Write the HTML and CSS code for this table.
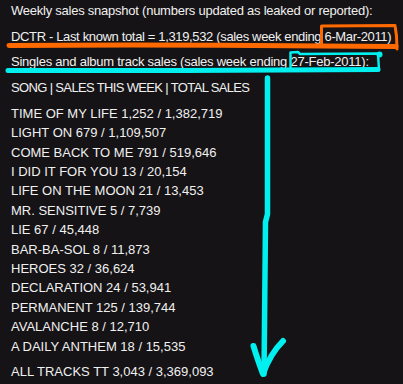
FILE: index.html
```html
<!DOCTYPE html>
<html>
<head>
<meta charset="utf-8">
<link rel="stylesheet" href="styles.css">
</head>
<body>
<div class="post">
  <p class="line tight">Weekly sales snapshot (numbers updated as leaked or reported):</p>
  <p class="line tighter">DCTR - Last known total = 1,319,532 (sales week ending 6-Mar-2011)</p>
  <p class="line tight">Singles and album track sales (sales week ending 27-Feb-2011):</p>
  <p class="line heading">SONG | SALES THIS WEEK | TOTAL SALES</p>
  <ul class="list">
    <li>TIME OF MY LIFE 1,252 / 1,382,719</li>
    <li>LIGHT ON 679 / 1,109,507</li>
    <li>COME BACK TO ME 791 / 519,646</li>
    <li>I DID IT FOR YOU 13 / 20,154</li>
    <li>LIFE ON THE MOON 21 / 13,453</li>
    <li>MR. SENSITIVE 5 / 7,739</li>
    <li>LIE 67 / 45,448</li>
    <li>BAR-BA-SOL 8 / 11,873</li>
    <li>HEROES 32 / 36,624</li>
    <li>DECLARATION 24 / 53,941</li>
    <li>PERMANENT 125 / 139,744</li>
    <li>AVALANCHE 8 / 12,710</li>
    <li>A DAILY ANTHEM 18 / 15,535</li>
  </ul>
  <p class="line">ALL TRACKS TT 3,043 / 3,369,093</p>
</div>
<svg class="marks" width="403" height="384" viewBox="0 0 403 384">
  <g fill="none" stroke="#ff6a00" stroke-linecap="round" stroke-linejoin="round">
    <path d="M9,45.5 C100,44.5 300,45.5 396,46.5" stroke-width="5"/>
    <path d="M321.5,45 L321.5,26 L395,25.5 L396.5,36 L397,49" stroke-width="3"/>
  </g>
  <g fill="none" stroke="#00f0f0" stroke-linecap="round" stroke-linejoin="round">
    <path d="M8,70.5 C100,71 300,70 378,69.5" stroke-width="5"/>
    <path d="M290.5,69 L290.5,52.5 L298,52 L300,54 L378,53.5 L379,70" stroke-width="2.5"/>
    <circle cx="379.5" cy="54.5" r="3" fill="#00f0f0" stroke="none"/>
    <path d="M267.5,78 L267.5,214 L265.5,222 L264,374" stroke-width="5.5"/>
    <path d="M253.5,346 Q257,358 263,374 Q270,354 283,341" stroke-width="6"/>
  </g>
</svg>
</body>
</html>
```
FILE: styles.css
```css
html, body {
  margin: 0;
  padding: 0;
  background: #151315;
}
body {
  width: 403px;
  height: 384px;
  overflow: hidden;
  position: relative;
  font-family: "Liberation Sans", Arial, sans-serif;
  font-size: 13px;
  line-height: 19.4px;
  color: #f0f0f0;
}
.post {
  padding: 1px 0 0 11px;
  display: flex;
  flex-direction: column;
  gap: 6.3px;
}
.line {
  margin: 0;
  white-space: nowrap;
}
.tight {
  letter-spacing: -0.24px;
}
.tighter {
  letter-spacing: -0.35px;
}
.heading {
  letter-spacing: -0.65px;
}
.list {
  list-style: none;
  margin: 0;
  padding: 0;
}
.list li {
  white-space: nowrap;
}
.marks {
  position: absolute;
  top: 0;
  left: 0;
  pointer-events: none;
}
```
